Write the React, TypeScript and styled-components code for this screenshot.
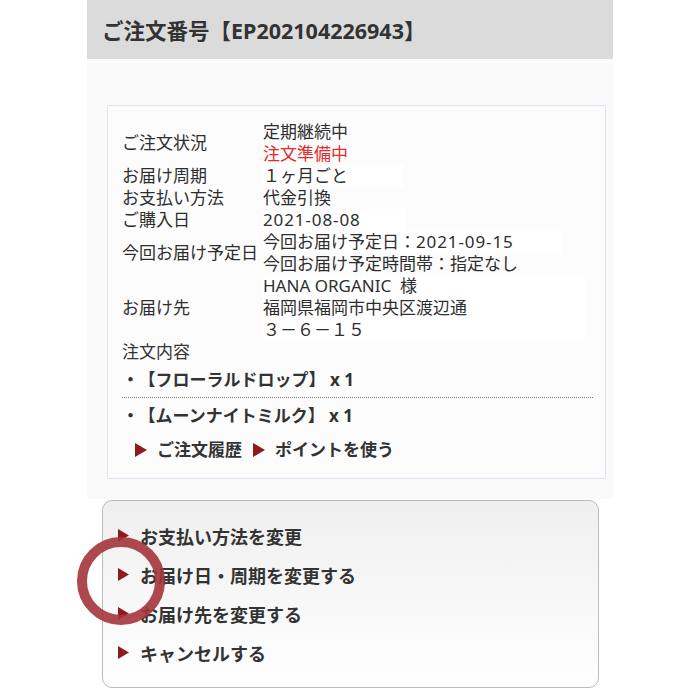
import React from "react";
import styled, { createGlobalStyle } from "styled-components";

const Global = createGlobalStyle`
  html, body { margin: 0; padding: 0; background: #fff; }
  body { font-family: "Noto Sans", "Noto Sans CJK JP", sans-serif; color: #333; }
`;

const Page = styled.div`
  width: 526px;
  margin: 0 auto;
  display: flex;
  flex-direction: column;
`;

const Header = styled.div`
  height: 59px;
  background: #dcdbdc;
  display: flex;
  align-items: center;
  padding-left: 15px;
  font-size: 21.5px;
  font-weight: 700;
  color: #333;
`;

const Panel = styled.div`
  background: #fafafa;
  padding: 46px 7px 20px 20px;
`;

const InfoBox = styled.div`
  background: #fcfcfd;
  border: 1px solid #e2e2f2;
  padding: 15px 12px 17px 14px;
  font-size: 17px;
  line-height: 22px;
`;

const InfoGrid = styled.div`
  display: grid;
  grid-template-columns: 141px 1fr;
`;

const Label = styled.div`
  display: flex;
  align-items: center;
  color: #2e2e2e;
`;

const Value = styled.div`
  display: flex;
  flex-direction: column;
  align-items: flex-start;
`;

const Line = styled.span<{ $red?: boolean; $w?: number }>`
  display: block;
  white-space: pre;
  color: ${(p) => (p.$red ? "#e32b2b" : "#2e2e2e")};
  background: ${(p) => (p.$w ? "#fff" : "transparent")};
  width: ${(p) => (p.$w ? `${p.$w}px` : "auto")};
`;

const Num = styled.span`
  letter-spacing: 0.9px;
`;

const SectionTitle = styled.div`
  grid-column: 1 / span 2;
`;

const Item = styled.div<{ $first?: boolean }>`
  font-weight: 700;
  padding: ${(p) => (p.$first ? "6px 0 6px" : "7px 0 0")};
  border-bottom: ${(p) => (p.$first ? "1px dotted #777" : "none")};
`;

const Bullet = styled.span`
  padding-right: 8px;
`;

const LinkRow = styled.div`
  display: flex;
  align-items: center;
  margin-top: 12px;
  padding-left: 13px;
  font-weight: 700;
`;

const Link = styled.span`
  display: inline-flex;
  align-items: center;
  gap: 10px;
  margin-right: 11px;
`;

const Tri = ({ w = 12, h = 14 }: { w?: number; h?: number }) => (
  <svg width={w} height={h} viewBox="0 0 12 14" style={{ flexShrink: 0 }}>
    <polygon points="0,0 12,7 0,14" fill="#8f1a1c" />
  </svg>
);

const Menu = styled.div`
  position: relative;
  margin: 1px 14px 0 15px;
  height: 188px;
  box-sizing: border-box;
  border: 1.5px solid #bcbcbc;
  border-radius: 10px;
  background: linear-gradient(#efefef, #ffffff);
  padding: 15px 0 0 15px;
`;

const MenuItem = styled.div`
  display: flex;
  align-items: center;
  gap: 11px;
  height: 39px;
  font-size: 18px;
  font-weight: 700;
  color: #333;
`;

const Circle = styled.div`
  position: absolute;
  left: -26px;
  top: 36px;
  width: 88px;
  height: 88px;
  box-sizing: border-box;
  border: 10px solid rgba(164, 52, 60, 0.9);
  border-radius: 50%;
`;

type L = { t: React.ReactNode; k: string; red?: boolean; w?: number };

const rows: { label: string; lines: L[] }[] = [
  { label: "ご注文状況", lines: [{ k: "a", t: "定期継続中" }, { k: "b", t: "注文準備中", red: true }] },
  { label: "お届け周期", lines: [{ k: "c", t: "１ヶ月ごと", w: 140 }] },
  { label: "お支払い方法", lines: [{ k: "d", t: "代金引換" }] },
  { label: "ご購入日", lines: [{ k: "e", t: <Num>2021-08-08</Num>, w: 143 }] },
  {
    label: "今回お届け予定日",
    lines: [
      { k: "f", t: <>今回お届け予定日：<Num>2021-09-15</Num></>, w: 299 },
      { k: "g", t: "今回お届け予定時間帯：指定なし" },
    ],
  },
  {
    label: "お届け先",
    lines: [
      { k: "h", t: "HANA ORGANIC  様", w: 322 },
      { k: "i", t: "福岡県福岡市中央区渡辺通", w: 322 },
      { k: "j", t: "３－６－１５", w: 322 },
    ],
  },
];

export default function App() {
  return (
    <>
      <Global />
      <Page>
        <Header>ご注文番号【EP202104226943】</Header>
        <Panel>
          <InfoBox>
            <InfoGrid>
              {rows.map((r) => (
                <React.Fragment key={r.label}>
                  <Label>{r.label}</Label>
                  <Value>
                    {r.lines.map((l) => (
                      <Line key={l.k} $red={l.red} $w={l.w}>
                        {l.t}
                      </Line>
                    ))}
                  </Value>
                </React.Fragment>
              ))}
              <SectionTitle>注文内容</SectionTitle>
            </InfoGrid>
            <Item $first>
              <Bullet>・</Bullet>【フローラルドロップ】 x 1
            </Item>
            <Item>
              <Bullet>・</Bullet>【ムーンナイトミルク】 x 1
            </Item>
            <LinkRow>
              <Link>
                <Tri />
                ご注文履歴
              </Link>
              <Link>
                <Tri />
                ポイントを使う
              </Link>
            </LinkRow>
          </InfoBox>
        </Panel>
        <Menu>
          {["お支払い方法を変更", "お届け日・周期を変更する", "お届け先を変更する", "キャンセルする"].map((t) => (
            <MenuItem key={t}>
              <Tri w={11} h={13} />
              {t}
            </MenuItem>
          ))}
          <Circle />
        </Menu>
      </Page>
    </>
  );
}
